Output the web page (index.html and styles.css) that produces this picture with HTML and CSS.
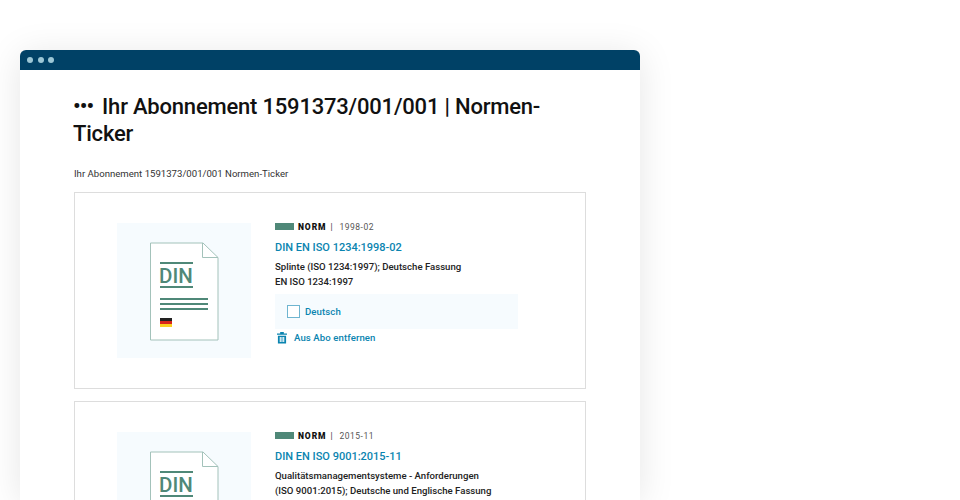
FILE: index.html
```html
<!DOCTYPE html>
<html lang="de">
  <head>
    <meta charset="UTF-8" />
    <title>Ihr Abonnement</title>
    <link rel="stylesheet" href="styles.css">
  </head>
  <body>
    <div class="window">
      <div class="titlebar">
        <span class="dot"></span>
        <span class="dot"></span>
        <span class="dot"></span>
      </div>
      <div class="content">
        <h1>Ihr Abonnement 1591373/001/001 | Normen-Ticker</h1>
        <p class="intro">Ihr Abonnement 1591373/001/001 Normen-Ticker</p>

        <!-- Card 1 -->
        <div class="card">
          <div class="thumb">
            <svg class="doc" width="70" height="100" viewBox="0 0 70 100">
              <path d="M1.5 1H54L69 15.5V98H1.5Z" fill="#fff" stroke="#a3c2ba" />
              <path d="M53.5 1V15.5H69" fill="none" stroke="#a3c2ba" />
              <rect x="11" y="20" width="33" height="2" fill="#4f8878" />
              <text x="10" y="41" class="doc-text">DIN</text>
              <rect x="11" y="44" width="33" height="2" fill="#4f8878" />
              <rect x="11" y="56" width="48" height="2" fill="#4f8878" />
              <rect x="11" y="61" width="48" height="2" fill="#4f8878" />
              <rect x="11" y="66" width="48" height="2" fill="#4f8878" />
              <rect x="11" y="76" width="12" height="3" fill="#222" />
              <rect x="11" y="79" width="12" height="3" fill="#d8261c" />
              <rect x="11" y="82" width="12" height="3" fill="#fbd022" />
            </svg>
          </div>
          <div class="info">
            <div class="meta">
              <span class="bar"></span>
              <span class="type">NORM</span>
              <span class="sep">|</span>
              <span class="date">1998-02</span>
            </div>
            <a class="title">DIN EN ISO 1234:1998-02</a>
            <p class="desc">Splinte (ISO 1234:1997); Deutsche Fassung<br>EN ISO 1234:1997</p>
            <div class="option">
              <span class="checkbox"></span>
              <span>Deutsch</span>
            </div>
            <a class="remove">
              <svg width="10" height="13" viewBox="0 0 11 13">
                <path d="M0 2H3.5V0.5H7.5V2H11V3.5H0ZM1 4.5H10V13H1ZM3 6V11.5H4.2V6ZM4.9 6V11.5H6.1V6ZM6.8 6V11.5H8V6Z" fill="#0a84b0" fill-rule="evenodd" />
              </svg>
              Aus Abo entfernen
            </a>
          </div>
        </div>

        <!-- Card 2 -->
        <div class="card">
          <div class="thumb">
            <svg class="doc" width="70" height="100" viewBox="0 0 70 100">
              <path d="M1.5 1H54L69 15.5V98H1.5Z" fill="#fff" stroke="#a3c2ba" />
              <path d="M53.5 1V15.5H69" fill="none" stroke="#a3c2ba" />
              <rect x="11" y="20" width="33" height="2" fill="#4f8878" />
              <text x="10" y="41" class="doc-text">DIN</text>
              <rect x="11" y="44" width="33" height="2" fill="#4f8878" />
            </svg>
          </div>
          <div class="info">
            <div class="meta">
              <span class="bar"></span>
              <span class="type">NORM</span>
              <span class="sep">|</span>
              <span class="date">2015-11</span>
            </div>
            <a class="title">DIN EN ISO 9001:2015-11</a>
            <p class="desc">Qualitätsmanagementsysteme - Anforderungen<br>(ISO 9001:2015); Deutsche und Englische Fassung</p>
          </div>
        </div>
      </div>
    </div>
  </body>
</html>
```

FILE: styles.css
```css
html,
body {
  height: 500px;
  overflow: hidden;
}

body {
  font-family: Roboto, "Liberation Sans", sans-serif;
  background: #fff;
  margin: 0;
  padding: 50px 0 0 20px;
  box-sizing: border-box;
}

.window {
  width: 620px;
  height: 450px;
  background: white;
  border-radius: 6px 6px 0 0;
  box-shadow: 0 4px 36px rgba(0, 0, 0, 0.1);
}

.titlebar {
  display: flex;
  align-items: center;
  gap: 4.5px;
  height: 20px;
  padding-left: 7px;
  background: #004166;
  border-radius: 6px 6px 0 0;
}

.dot {
  width: 6px;
  height: 6px;
  border-radius: 50%;
  background: #9cc7d6;
}

.content {
  height: 430px;
  overflow: hidden;
  padding: 23px 54px 0;
  box-sizing: border-box;
}

h1 {
  margin: 0 0 0 -1px;
  font-size: 22px;
  line-height: 27px;
  font-weight: 500;
  letter-spacing: -0.2px;
  color: #111;
}

h1::before {
  content: "•••";
  margin-right: 9px;
  letter-spacing: -1px;
}

.intro {
  margin: 20px 0 11px;
  font-size: 9.6px;
  line-height: 14px;
  color: #333;
}

.card {
  display: flex;
  gap: 24px;
  height: 197px;
  box-sizing: border-box;
  margin-bottom: 12px;
  padding: 30px 0 0 42px;
  border: 1px solid #ddd;
}

.thumb {
  display: flex;
  justify-content: center;
  width: 134px;
  height: 135px;
  padding: 19px 1px 0 0;
  box-sizing: border-box;
  background: #f6fbfe;
}

.doc-text {
  font-family: Roboto, sans-serif;
  font-size: 20.5px;
  font-weight: 500;
  fill: #4f8878;
}

.info {
  width: 243px;
}

.meta {
  display: flex;
  align-items: center;
  height: 9px;
  margin-top: -1px;
  font-size: 8.5px;
}

.bar {
  width: 19px;
  height: 7px;
  margin-right: 4px;
  background: #4f8878;
}

.type {
  font-weight: 900;
  letter-spacing: 0.9px;
  color: #111;
}

.sep {
  margin: 0 7px 0 4px;
  color: #333;
}

.date {
  letter-spacing: 0.5px;
  color: #555;
}

.title {
  display: block;
  margin-top: 10px;
  font-size: 11px;
  line-height: 14px;
  font-weight: 500;
  color: #0a84b0;
}

.desc {
  margin: 4px 0 0;
  font-size: 9.6px;
  line-height: 15px;
  font-weight: 500;
  color: #222;
}

.option {
  display: flex;
  align-items: center;
  gap: 5px;
  height: 35px;
  margin-top: 5px;
  padding-left: 12px;
  background: #f6fbfe;
  font-size: 9.6px;
  font-weight: 500;
  letter-spacing: 0.1px;
  color: #0a84b0;
}

.checkbox {
  width: 11px;
  height: 11px;
  border: 1px solid #6fb5d0;
  background: #fff;
}

.remove {
  display: flex;
  align-items: center;
  gap: 7px;
  margin-top: 2px;
  padding-left: 2px;
  font-size: 9.6px;
  font-weight: 500;
  letter-spacing: 0.1px;
  color: #0a84b0;
}
```
